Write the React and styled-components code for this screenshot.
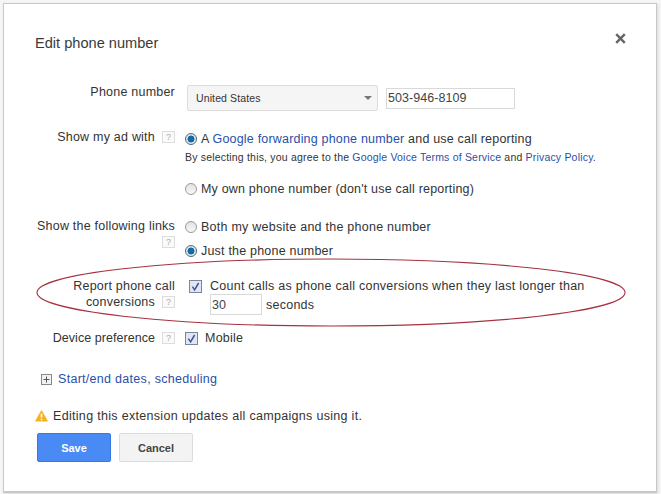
import React from "react";
import styled, { createGlobalStyle } from "styled-components";

const Global = createGlobalStyle`
  html, body { margin: 0; padding: 0; background: #fff; }
  body { font-family: "Liberation Sans", Arial, sans-serif; font-size: 13px; color: #333; }
`;
const Page = styled.div`
  position: relative;
  width: 661px;
  height: 494px;
  overflow: hidden;
  background: #f6f6f6;
  padding: 3px 4px 1px 3px;
  box-sizing: border-box;
`;
const Modal = styled.div`
  position: relative;
  width: 654px;
  height: 490px;
  box-sizing: border-box;
  background: #fff;
  border: 1px solid #c8c8c8;
  border-bottom-width: 2px;
  padding: 29px 0 0 31px;
  box-shadow: 1px 1px 3px rgba(0,0,0,.12);
`;
const Title = styled.h1`
  margin: 0;
  font-size: 14.6px;
  line-height: 20px;
  font-weight: 400;
  color: #3a3a3a;
`;
const Close = styled.svg`
  position: absolute;
  right: 30px;
  top: 29px;
  width: 11px;
  height: 11px;
`;
const Form = styled.div`
  display: flex;
  flex-direction: column;
  margin-top: 27px;
`;
const Row = styled.div`
  display: grid;
  grid-template-columns: 140px 1fr;
  column-gap: 10px;
  height: ${p => p.$h}px;
`;
const Label = styled.div`
  text-align: right;
  font-size: 12.5px;
  letter-spacing: ${p => p.$tight ? ".05px" : ".22px"};
  line-height: 16px;
  color: #333;
  padding-top: ${p => p.$top || 0}px;
  white-space: nowrap;
`;
const Help = styled.span`
  display: inline-flex;
  align-items: center;
  justify-content: center;
  box-sizing: border-box;
  width: 13px;
  height: 12px;
  margin: 2px 0 0 7px;
  border: 1px solid #ddd;
  background: #fafafa;
  color: #aaa;
  font-size: 9px;
  letter-spacing: 0;
  line-height: 1;
  vertical-align: top;
`;
const Field = styled.div`
  display: flex;
  flex-direction: column;
  align-items: flex-start;
  padding-top: ${p => p.$top || 0}px;
`;
const Inline = styled.div`
  display: flex;
  align-items: center;
  gap: ${p => p.$gap ?? 4}px;
  height: ${p => p.$h || 16}px;
  margin-top: ${p => p.$mt || 0}px;
  margin-left: ${p => p.$ml || 0}px;
`;
const Select = styled.div`
  display: flex;
  align-items: center;
  justify-content: space-between;
  box-sizing: border-box;
  width: 191px;
  height: 26px;
  margin-left: 2px;
  padding: 0 5px 0 8px;
  border: 1px solid #dcdcdc;
  border-radius: 2px;
  background: #f5f5f5;
  font-size: 10.5px;
  letter-spacing: .12px;
  color: #333;
`;
const Caret = styled.span`
  width: 0;
  height: 0;
  border-left: 4px solid transparent;
  border-right: 4px solid transparent;
  border-top: 4px solid #777;
`;
const TextInput = styled.div`
  display: flex;
  align-items: center;
  box-sizing: border-box;
  width: ${p => p.$w}px;
  height: ${p => p.$h}px;
  padding-left: 1px;
  border: 1px solid #d9d9d9;
  font-size: 12.5px;
  letter-spacing: .05px;
  color: #444;
  background: #fff;
`;
const Text = styled.span`
  font-size: 12.5px;
  letter-spacing: ${p => p.$ls ?? 0.25}px;
  line-height: 16px;
  color: #333;
  white-space: nowrap;
`;
const Link = styled.a`
  color: #2a4fa8;
  text-decoration: none;
`;
const Small = styled.div`
  font-size: 10.5px;
  letter-spacing: .19px;
  line-height: 14px;
  margin-top: 3px;
  color: #333;
  white-space: nowrap;
`;
const RadioDot = styled.span`
  display: inline-block;
  box-sizing: border-box;
  flex: none;
  width: 12px;
  height: 12px;
  border-radius: 50%;
  border: 1px solid ${p => p.$on ? "#50697f" : "#9a9a9a"};
  background: ${p => p.$on
    ? "radial-gradient(circle, #0b6eb0 0 2.6px, #1d4f78 3.1px, #dfe6ec 3.8px)"
    : "linear-gradient(#e2e2e2, #f8f8f8)"};
`;
const Check = styled.svg`
  flex: none;
  width: 13px;
  height: 13px;
`;
const Overlay = styled.svg`
  position: absolute;
  left: 0;
  top: 0;
  width: 661px;
  height: 494px;
  pointer-events: none;
`;
const Expand = styled.div`
  display: flex;
  align-items: center;
  gap: 6px;
  margin: 19px 0 0 6px;
  height: 16px;
`;
const PlusBox = styled.svg`
  width: 11px;
  height: 11px;
`;
const Warning = styled.div`
  display: flex;
  align-items: center;
  gap: 5px;
  margin-top: 21px;
  height: 16px;
`;
const WarnIcon = styled.svg`
  width: 13px;
  height: 12px;
`;
const Buttons = styled.div`
  display: flex;
  gap: 8px;
  margin: 9px 0 0 2px;
`;
const Button = styled.div`
  display: flex;
  align-items: center;
  justify-content: center;
  box-sizing: border-box;
  width: 74px;
  height: 29px;
  border-radius: 2px;
  font-size: 11px;
  font-weight: 700;
  border: 1px solid ${p => p.$primary ? "#3b78e7" : "#dcdcdc"};
  background: ${p => p.$primary ? "#4a8af4" : "#f3f3f3"};
  color: ${p => p.$primary ? "#fff" : "#444"};
`;

const CheckBox = () => (
  <Check viewBox="0 0 13 13">
    <rect x=".5" y=".5" width="12" height="12" fill="#e3e6f0" stroke="#7b869c" />
    <path d="M3.4 6.6 L5.6 9.8 L9.6 3" fill="none" stroke="#3b55a0" strokeWidth="1.5" />
  </Check>
);

export default function App() {
  return (
    <>
      <Global />
      <Page>
        <Modal>
          <Title>Edit phone number</Title>
          <Close viewBox="0 0 11 11">
            <path d="M1.2 1.2 L9.8 9.8 M9.8 1.2 L1.2 9.8" stroke="#666" strokeWidth="2.4" />
          </Close>
          <Form>
            <Row $h={49}>
              <Label $top={4}>Phone number</Label>
              <Field $top={5}>
                <Inline $h={26} $gap={8}>
                  <Select>United States<Caret /></Select>
                  <TextInput $w={129} $h={21}>503-946-8109</TextInput>
                </Inline>
              </Field>
            </Row>
            <Row $h={89}>
              <Label>Show my ad with<Help>?</Help></Label>
              <Field>
                <Inline $mt={2}>
                  <RadioDot $on />
                  <Text $ls={0.19}>A <Link>Google forwarding phone number</Link> and use call reporting</Text>
                </Inline>
                <Small>By selecting this, you agree to the <Link>Google Voice Terms of Service</Link> and <Link>Privacy Policy</Link>.</Small>
                <Inline $mt={17}>
                  <RadioDot />
                  <Text $ls={0.19}>My own phone number (don't use call reporting)</Text>
                </Inline>
              </Field>
            </Row>
            <Row $h={60}>
              <Label>Show the following links<br /><Help>?</Help></Label>
              <Field>
                <Inline $mt={1}>
                  <RadioDot />
                  <Text>Both my website and the phone number</Text>
                </Inline>
                <Inline $mt={8}>
                  <RadioDot $on />
                  <Text $ls={0.2}>Just the phone number</Text>
                </Inline>
              </Field>
            </Row>
            <Row $h={52}>
              <Label>Report phone call<br />conversions<Help>?</Help></Label>
              <Field>
                <Inline $gap={8} $ml={4}>
                  <CheckBox />
                  <Text>Count calls as phone call conversions when they last longer than</Text>
                </Inline>
                <Inline $gap={4} $h={21} $ml={25} $mt={0}>
                  <TextInput $w={52} $h={21}>30</TextInput>
                  <Text>seconds</Text>
                </Inline>
              </Field>
            </Row>
            <Row $h={22}>
              <Label $tight>Device preference<Help>?</Help></Label>
              <Field>
                <Inline $gap={7}>
                  <CheckBox />
                  <Text>Mobile</Text>
                </Inline>
              </Field>
            </Row>
          </Form>
          <Expand>
            <PlusBox viewBox="0 0 11 11">
              <rect x=".5" y=".5" width="10" height="10" fill="#f2f2f2" stroke="#888" />
              <path d="M2.5 5.5 H8.5 M5.5 2.5 V8.5" stroke="#555" />
            </PlusBox>
            <Text $ls={0.29}><Link>Start/end dates, scheduling</Link></Text>
          </Expand>
          <Warning>
            <WarnIcon viewBox="0 0 13 12">
              <path d="M6.5 1 L12.2 11 H.8 Z" fill="#f5b324" stroke="#f5b324" strokeWidth="1.2" strokeLinejoin="round" />
              <path d="M6.5 3.8 V7.6 M6.5 8.7 V10.2" stroke="#fff" strokeWidth="1.6" />
            </WarnIcon>
            <Text $ls={0.31}>Editing this extension updates all campaigns using it.</Text>
          </Warning>
          <Buttons>
            <Button $primary>Save</Button>
            <Button>Cancel</Button>
          </Buttons>
        </Modal>
        <Overlay viewBox="0 0 661 494">
          <ellipse cx="331" cy="292.5" rx="294" ry="33.5" fill="none" stroke="#a8313f" strokeWidth="1.1" />
        </Overlay>
      </Page>
    </>
  );
}
